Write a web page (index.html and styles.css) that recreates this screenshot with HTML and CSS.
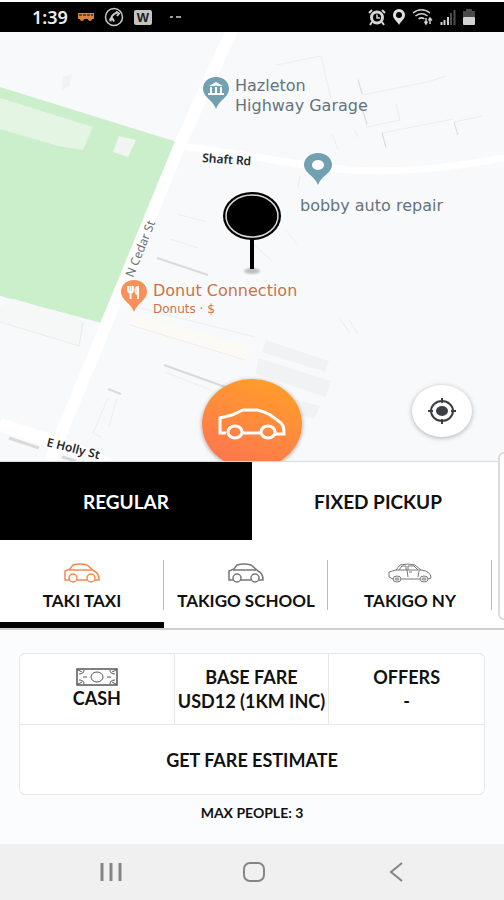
FILE: index.html
```html
<!DOCTYPE html>
<html lang="en">
<head>
    <meta charset="UTF-8">
    <meta name="viewport" content="width=device-width, initial-scale=1.0">
    <title>Book a ride</title>
    <link rel="stylesheet" href="styles.css">
</head>
<body>
    <header class="status-bar">
        <div class="status-left">
            <span class="clock">1:39</span>
            <svg width="18" height="20" viewBox="0 0 18 20">
                <path d="M1 6h16v6h-2a2 2 0 0 1-4 0H7a2 2 0 0 1-4 0H1z" fill="#d98243"/>
                <path d="M2 8h14" stroke="#4a2b18" stroke-width="1.5" stroke-dasharray="3 1"/>
            </svg>
            <svg width="20" height="20" viewBox="0 0 20 20" fill="none" stroke="#c9c9c9">
                <circle cx="10" cy="10" r="8.5" stroke-width="1.5"/>
                <path d="M13 5.5c-4 1.5-6.5 5-6.5 9" stroke-width="2"/>
                <path d="M12 4.5l3 2-2 2.5M5.5 13l3-1.5 1.5 3" stroke-width="2"/>
            </svg>
            <svg width="20" height="20" viewBox="0 0 20 20">
                <rect x="1" y="3" width="18" height="15" rx="2" fill="#c4c4c4"/>
                <text class="badge-letter" x="10" y="15" text-anchor="middle">W</text>
            </svg>
            <svg width="28" height="20" viewBox="0 0 28 20" stroke="#cfcfcf" stroke-width="1.5">
                <path d="M8 10h3M14 10h5"/>
            </svg>
        </div>
        <div class="status-right">
            <svg width="18" height="20" viewBox="0 0 18 20" fill="none" stroke="#d6d6d6">
                <circle cx="9" cy="10.5" r="5.5" stroke-width="3"/>
                <path d="M9 7.5v3.500h3" stroke-width="1.5"/>
                <path d="M1 6l3-3M14 3l3 3M4 15l-2 3M14 15l2 3" stroke-width="2"/>
            </svg>
            <svg width="14" height="20" viewBox="0 0 14 20">
                <path fill="#e0e0e0" fill-rule="evenodd" d="M7 2a6 6 0 0 1 6 6c0 4-4 6-6 10-2-4-6-6-6-10a6 6 0 0 1 6-6zM7 5a3 3 0 1 0 0 6 3 3 0 0 0 0-6z"/>
            </svg>
            <svg width="22" height="20" viewBox="0 0 22 20" fill="none" stroke="#cfcfcf" stroke-width="1.5">
                <path d="M1 6c5-4.5 12-4.5 17 0M3.5 9c4-3 8-3 12 0M6.5 12c2-1.5 4-1.5 6 0"/>
                <path d="M14 11v6M12.5 14.5l1.5 2.5 1.5-2.5M18 17v-6M16.5 13.5l1.5-2.5 2 2.5"/>
            </svg>
            <svg width="16" height="20" viewBox="0 0 16 20">
                <path d="M1.5 18v-3M4.5 18v-5M8 18v-8" stroke="#cfcfcf" stroke-width="2"/>
                <path d="M11 18V6M14.5 18V3" stroke="#4d4d4d" stroke-width="2"/>
            </svg>
            <svg width="14" height="20" viewBox="0 0 14 20">
                <path d="M4 2h6v2h3v6H1V4h3z" fill="#4a4a4a"/>
                <rect x="1" y="10" width="12" height="8" rx="1" fill="#d2d2d2"/>
            </svg>
        </div>
    </header>

    <main>
        <section class="map">
            <!-- viewBox starts under the status bar -->
            <svg class="map-canvas" viewBox="0 32 504 429" preserveAspectRatio="xMidYMid slice">
                <defs>
                    <path id="cedar" d="M133 278L168 191"/>
                    <filter id="soft"><feGaussianBlur stdDeviation="1"/></filter>
                </defs>
                <rect x="0" y="32" width="504" height="429" fill="#f8f9fb"/>

                <!-- park -->
                <path d="M0 87L177 142 102 323 0 296z" fill="#cbeecb"/>
                <path d="M0 98L93 127 83 150 58 146 0 129z" fill="#e5f5e4"/>
                <path d="M119 136L136 140 128 157 113 152z" fill="#f1f5f1"/>
                <path d="M14 299L85 320 79 346 0 322 0 307z" fill="#f5f8f6"/>
                <path d="M0 322L79 346 83 322" fill="none" stroke="#e9ecec"/>
                <path d="M63 77l9-3-2 12-8 4z" fill="#f1f2f4"/>

                <!-- roads -->
                <g fill="none" stroke="#fff">
                    <path d="M232 30L182 140 50 461" stroke-width="12"/>
                    <path d="M180 146C240 153 300 166 350 170 410 173 460 166 504 158" stroke-width="7"/>
                    <path d="M0 425L60 443 110 465" stroke-width="13"/>
                </g>

                <!-- buildings -->
                <path d="M134 313L250 347 245 361 130 327z" fill="#fbfaf5"/>
                <path d="M266 340L329 361 325 372 262 352zM258 358L331 381 326 397 256 374zM290 398L320 406 314 419 294 414z" fill="#f1f2f4"/>
                <g fill="none" stroke="#eceeef">
                    <path d="M276 65L321 56 331 99M358 78L363 95 427 82 447 76M361 105L367 127 400 120 396 104M332 134L338 149M358 137L354 129M382 132L386 149M382 133L453 119M458 135L454 122 482 116"/>
                    <path d="M177 214l30 8M170 239l28 9M300 176l-2 12M253 244l20 18M285 229l12 15M130 325l115 35M140 308l115 29M340 319l10 14M349 320l9 14M165 372l45 18M108 398l-15 35 8 4M117 398l-8 28"/>
                </g>
                <g fill="none" stroke="#d8dadc" stroke-width="2">
                    <path d="M157 258L208 275M164 365L228 388M108 389L121 394"/>
                    <path d="M358 80l4 14M362 107l5 17M382 133l4 14M454 122l4 13" stroke-width="1"/>
                    <path d="M9 438L39 448M62 457l14 4" stroke-width="3"/>
                </g>

                <!-- street names -->
                <text class="street street-dark" transform="rotate(4 202 162)" x="202" y="162">Shaft Rd</text>
                <text class="street"><textPath href="#cedar">N Cedar St</textPath></text>
                <text class="street street-dark" transform="rotate(14 46 446)" x="46" y="446">E Holly St</text>

                <!-- places -->
                <path d="M216 77c8 0 13 5 13 12 0 8-10 11-13 20-3-9-13-12-13-20 0-7 5-12 13-12z" fill="#71a0b1"/>
                <path d="M209 86l7-4 7 4zM210 87h2v6h-2zM215 87h2v6h-2zM220 87h2v6h-2zM208 93h16v2h-16z" fill="#fff"/>
                <text class="place" x="235" y="91">Hazleton</text>
                <text class="place" x="235" y="111">Highway Garage</text>

                <path d="M318 153c8 0 14 5 14 12 0 8-11 11-14 20-3-9-14-12-14-20 0-7 6-12 14-12z" fill="#71a0b1"/>
                <ellipse cx="318" cy="165" rx="6" ry="5" fill="#fff"/>
                <text class="place" x="300" y="211">bobby auto repair</text>

                <path d="M134 280c8 0 13 5 13 12 0 8-10 11-13 20-3-9-13-12-13-20 0-7 5-12 13-12z" fill="#fb8f59"/>
                <path d="M128 286v4a2 2 0 0 0 5 0v-4M130.5 286v13M138 299v-12c-3 0-3 6-1 7" fill="none" stroke="#fff" stroke-width="2"/>
                <text class="place place-food" x="153" y="296">Donut Connection</text>
                <text class="place place-food place-note" x="153" y="313">Donuts · $</text>

                <!-- pickup marker -->
                <ellipse cx="252" cy="271" rx="8" ry="3" fill="#bcc0c2" filter="url(#soft)"/>
                <path d="M252 236v33" stroke="#000" stroke-width="4"/>
                <ellipse cx="252" cy="216" rx="29" ry="24" fill="#000"/>
                <ellipse cx="252" cy="216" rx="26" ry="21" fill="none" stroke="#ddd" stroke-width="1.5"/>
            </svg>

            <button class="ride-button" type="button" aria-label="Book ride">
                <svg width="68" height="32" viewBox="0 0 68 32" fill="none" stroke="#fff" stroke-width="3">
                    <path d="M8 25H2V10L14 7 25 2H39C50 4 55 9 63 15 66 18 66 21 66 26H57M24 25H42"/>
                    <ellipse cx="17" cy="24" rx="7" ry="6"/>
                    <ellipse cx="50" cy="24" rx="7" ry="6"/>
                </svg>
            </button>
            <button class="locate-button" type="button" aria-label="My location">
                <svg width="30" height="28" viewBox="0 0 30 28" fill="none" stroke="#3b3e45" stroke-width="2">
                    <ellipse cx="15" cy="14" rx="11" ry="10"/>
                    <path d="M15 1v5M15 22v5M1 14h5M24 14h5"/>
                    <ellipse cx="15" cy="14" rx="6" ry="5" fill="#3b3e45" stroke="none"/>
                </svg>
            </button>
        </section>

        <section class="sheet">
            <div class="edge-handle"></div>
            <div class="mode-tabs">
                <button class="mode-tab active" type="button">REGULAR</button>
                <button class="mode-tab" type="button">FIXED PICKUP</button>
            </div>
            <div class="service-tabs">
                <button class="service-tab active" type="button">
                    <svg width="36" height="20" viewBox="0 0 36 20" fill="none" stroke="currentColor">
                        <path d="M5 17H1V8L6 6 9 2Q16 0 23 2L30 8Q35 10 35 17H31M13 17H23M5 7H28" stroke-width="1.5"/>
                        <ellipse cx="9" cy="15" rx="4" ry="4" stroke-width="1.5"/>
                        <ellipse cx="27" cy="15" rx="4" ry="4" stroke-width="1.5"/>
                    </svg>
                    <span>TAKI TAXI</span>
                </button>
                <button class="service-tab" type="button">
                    <svg width="36" height="20" viewBox="0 0 36 20" fill="none" stroke="currentColor">
                        <path d="M5 17H1V8L6 6 9 2Q16 0 23 2L30 8Q35 10 35 17H31M13 17H23M5 7H28" stroke-width="1.5"/>
                        <ellipse cx="9" cy="15" rx="4" ry="4" stroke-width="1.5"/>
                        <ellipse cx="27" cy="15" rx="4" ry="4" stroke-width="1.5"/>
                    </svg>
                    <span>TAKIGO SCHOOL</span>
                </button>
                <button class="service-tab" type="button">
                    <svg width="44" height="20" viewBox="0 0 44 20" fill="none" stroke="currentColor">
                        <path d="M5 16L1 14V9L8 7 12 2Q20 0 27 2L33 7Q43 8 43 15L40 16M13 16H32M8 7H33M11 7L14 3H18V7M20 7V3H26L30 7M19 7L20 14M31 8L30 14M21 9H24"/>
                        <ellipse cx="9" cy="16" rx="4" ry="3"/>
                        <ellipse cx="9" cy="16" rx="2" ry="1"/>
                        <ellipse cx="36" cy="16" rx="4" ry="3"/>
                        <ellipse cx="36" cy="16" rx="2" ry="1"/>
                    </svg>
                    <span>TAKIGO NY</span>
                </button>
            </div>

            <div class="fare">
                <div class="fare-card">
                    <button class="fare-cell" type="button">
                        <svg width="42" height="18" viewBox="0 0 42 18" fill="none" stroke="#555">
                            <rect x="1" y="1" width="40" height="16" stroke-width="1.5"/>
                            <path d="M8 2Q8 6 3 6M34 2Q34 6 39 6M8 16Q8 12 3 12M34 16Q34 12 39 12M7 9h4M31 9h4"/>
                            <path d="M2 2l4 2M40 2l-4 2M2 16l4-2M40 16l-4-2"/>
                            <ellipse cx="21" cy="9" rx="6" ry="5"/>
                        </svg>
                        <span>CASH</span>
                    </button>
                    <div class="fare-cell">
                        <span>BASE FARE</span>
                        <span>USD12 (1KM INC)</span>
                    </div>
                    <button class="fare-cell" type="button">
                        <span>OFFERS</span>
                        <span>-</span>
                    </button>
                    <button class="estimate-button" type="button">GET FARE ESTIMATE</button>
                </div>
                <p class="capacity">MAX PEOPLE: 3</p>
            </div>
        </section>
    </main>

    <nav class="system-nav">
        <button type="button" aria-label="Recent apps">
            <svg width="24" height="24" viewBox="0 0 24 24" stroke="#858585" stroke-width="3">
                <path d="M3 3v18M12 3v18M21 3v18"/>
            </svg>
        </button>
        <button type="button" aria-label="Home">
            <svg width="24" height="24" viewBox="0 0 24 24" fill="none" stroke="#858585" stroke-width="2">
                <rect x="2" y="3" width="20" height="18" rx="6"/>
            </svg>
        </button>
        <button type="button" aria-label="Back">
            <svg width="24" height="24" viewBox="0 0 24 24" fill="none" stroke="#858585" stroke-width="2">
                <path d="M17 3L6 12l11 9"/>
            </svg>
        </button>
    </nav>
</body>
</html>
```
FILE: styles.css
```css
* {
    margin: 0;
    padding: 0;
    box-sizing: border-box;
}

body {
    min-height: 100vh;
    display: flex;
    flex-direction: column;
    background-color: #fff;
    color: #111;
    font-family: Lato, "Liberation Sans", sans-serif;
}

button {
    border: none;
    background: none;
    color: inherit;
    font: inherit;
    cursor: pointer;
}

svg {
    display: block;
}

.status-bar {
    display: flex;
    justify-content: space-between;
    align-items: center;
    height: 32px;
    padding: 0 28px 0 32px;
    border-top: 2px solid #fff;
    background-color: #000;
}

.status-left,
.status-right {
    display: flex;
    align-items: center;
}

.status-left {
    gap: 9px;
}

.status-right {
    gap: 6px;
}

.clock {
    color: #eee;
    font-family: "Noto Sans", sans-serif;
    font-size: 18px;
    font-weight: 600;
    line-height: 20px;
}

.badge-letter {
    font-family: "Liberation Sans", sans-serif;
    font-size: 13px;
    font-weight: 700;
    fill: #222;
}

main {
    flex: 1;
    display: flex;
    flex-direction: column;
}

/* Map */

.map {
    position: relative;
    flex: 1;
    min-height: 320px;
    overflow: hidden;
}

.map-canvas {
    position: absolute;
    width: 100%;
    height: 100%;
}

.street {
    font-family: "Noto Sans", sans-serif;
    font-size: 12px;
    fill: #6b6f73;
}

.street-dark {
    font-weight: 600;
    fill: #26282a;
}

.place {
    font-family: "DejaVu Sans", sans-serif;
    font-size: 16px;
    fill: #64747c;
}

.place-food {
    fill: #cb7346;
}

.place-note {
    font-size: 12px;
}

.ride-button {
    position: absolute;
    left: 50%;
    bottom: -8px;
    width: 100px;
    height: 90px;
    transform: translateX(-50%);
    display: flex;
    align-items: center;
    justify-content: center;
    border-radius: 50%;
    background: linear-gradient(200deg, #ff9b2d 15%, #ff7550 90%);
    box-shadow: 0 1px 4px rgba(0, 0, 0, 0.35);
}

.locate-button {
    position: absolute;
    right: 32px;
    bottom: 24px;
    width: 60px;
    height: 52px;
    display: flex;
    align-items: center;
    justify-content: center;
    border-radius: 50%;
    background-color: #fff;
    box-shadow: 0 1px 5px rgba(0, 0, 0, 0.3);
}

/* Booking sheet */

.sheet {
    position: relative;
    background-color: #fff;
}

.edge-handle {
    position: absolute;
    top: -9px;
    right: 0;
    width: 6px;
    height: 168px;
    border: 2px solid #dcdcdc;
    border-right: none;
    border-radius: 8px 0 0 8px;
    background-color: #fff;
}

.mode-tabs {
    display: flex;
    border-top: 1px solid #d9dbdc;
}

.mode-tab {
    flex: 1;
    height: 78px;
    font-size: 19px;
    font-weight: 700;
}

.mode-tab.active {
    background-color: #000;
    color: #fff;
}

.service-tabs {
    display: flex;
    padding-right: 12px;
    border-bottom: 2px solid #cfcfcf;
}

.service-tab {
    flex: 1;
    display: flex;
    flex-direction: column;
    align-items: center;
    gap: 8px;
    height: 88px;
    padding-top: 23px;
    font-size: 17px;
    font-weight: 700;
    line-height: 20px;
    white-space: nowrap;
    background: linear-gradient(#bbb, #bbb) right 20px / 1px 50px no-repeat;
}

.service-tab svg {
    color: #777;
}

.service-tab.active {
    border-bottom: 6px solid #000;
}

.service-tab.active svg {
    color: #f58b4e;
}

.fare {
    padding: 23px 19px 21px;
    background-color: #fafcfe;
}

.fare-card {
    display: grid;
    grid-template-columns: repeat(3, 1fr);
    grid-template-rows: 70px 70px;
    border: 1px solid #e6e7e8;
    border-radius: 6px;
    background-color: #fff;
    font-size: 18px;
    font-weight: 700;
    line-height: 24px;
    white-space: nowrap;
}

.fare-cell {
    display: flex;
    flex-direction: column;
    align-items: center;
    justify-content: center;
    border-right: 1px solid #e6e7e8;
}

.fare-cell:nth-child(3) {
    border-right: none;
}

.estimate-button {
    grid-column: 1 / -1;
    border-top: 1px solid #e6e7e8;
}

.capacity {
    margin-top: 8px;
    text-align: center;
    font-size: 14px;
    font-weight: 700;
    line-height: 20px;
}

.system-nav {
    display: flex;
    justify-content: center;
    gap: 119px;
    padding: 16px 0 16px 4px;
    background-color: #f0f0f0;
}
```
